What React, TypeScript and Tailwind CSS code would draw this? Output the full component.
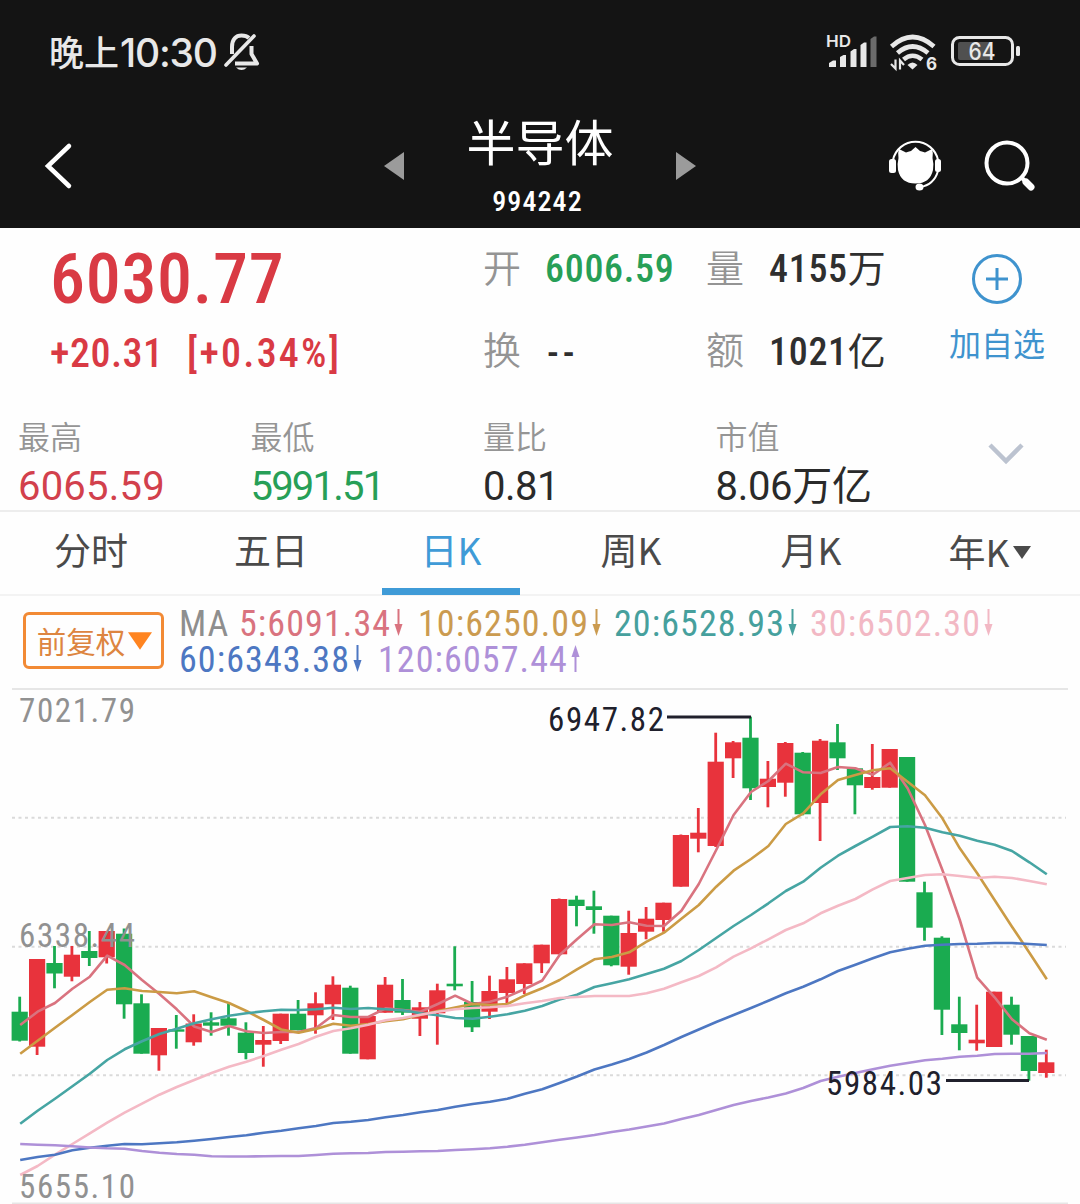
import { clsx } from "clsx";

type Candle = [dir: "u" | "d", high: number, top: number, bottom: number, low: number];

// vertical positions in chart space, one entry per trading day
const CANDLES: Candle[] = [
  ["d", 996.7, 1011.7, 1040.7, 1041.5],
  ["u", 959, 959, 1046.7, 1055],
  ["d", 946, 963, 973.5, 988.3],
  ["u", 946, 954.7, 976.7, 981.3],
  ["d", 931, 951, 958, 966],
  ["u", 931, 931, 957.3, 963.5],
  ["d", 928.5, 933.7, 1004.3, 1018.7],
  ["d", 994.3, 1003.3, 1053.7, 1053.7],
  ["u", 1028, 1028, 1055.3, 1070.7],
  ["d", 1015, 1029.3, 1031.7, 1048.7],
  ["u", 1014.3, 1023.5, 1042.3, 1045.7],
  ["d", 1012.3, 1022.3, 1025.7, 1035.7],
  ["d", 1003.3, 1018.3, 1025.7, 1035.7],
  ["d", 1022.3, 1032.7, 1053, 1059.3],
  ["u", 1026, 1040, 1044.7, 1066.7],
  ["u", 1013.7, 1013.7, 1041, 1044],
  ["d", 1000, 1013.7, 1030.3, 1030.3],
  ["u", 992.3, 1003.3, 1015.3, 1033.7],
  ["u", 976.3, 984.7, 1004.3, 1020],
  ["d", 985.7, 987.7, 1053.7, 1053.7],
  ["u", 1016, 1016, 1059.3, 1059.3],
  ["u", 977, 984.7, 1012.7, 1012.7],
  ["d", 979, 1000, 1012.7, 1015],
  ["u", 1002, 1007.3, 1018.7, 1036],
  ["u", 983.7, 990.3, 1013.3, 1044.7],
  ["d", 946.3, 983.7, 986.3, 990.3],
  ["d", 981, 1002, 1027.3, 1032],
  ["u", 975.7, 991, 1011.7, 1019],
  ["u", 967, 979.3, 993, 1003.3],
  ["u", 963.3, 963.3, 984, 994],
  ["u", 944.7, 944.7, 963.3, 973],
  ["u", 898.5, 899, 954.3, 954.3],
  ["d", 895.7, 899.7, 906, 926.3],
  ["d", 890.7, 906.3, 910, 933.7],
  ["d", 915.7, 915.7, 965.3, 966.3],
  ["u", 910.7, 933, 966.7, 974.7],
  ["u", 907, 918.7, 931.7, 939.3],
  ["u", 902.7, 902.7, 920, 931.7],
  ["u", 834.5, 835, 886.7, 886.7],
  ["u", 808, 832.7, 838.7, 852.3],
  ["u", 732.7, 761.7, 846, 847],
  ["u", 741, 742.3, 758.3, 778],
  ["d", 716.7, 737.7, 788.3, 800],
  ["u", 761, 778.7, 787, 807.3],
  ["u", 742, 743, 782.7, 796.7],
  ["d", 752, 752.7, 814.3, 815.3],
  ["u", 739, 740.7, 803, 841],
  ["d", 724, 742.3, 758.3, 770],
  ["d", 768.3, 768.3, 785.3, 814.3],
  ["u", 744, 777, 788, 789.7],
  ["u", 749, 749, 787.7, 787.7],
  ["d", 757, 757, 881.7, 881.7],
  ["d", 881.7, 892.3, 927.7, 940.7],
  ["d", 936.3, 937.7, 1009.7, 1035],
  ["d", 996.7, 1024.3, 1033, 1050.3],
  ["u", 1004.7, 1039.7, 1043.3, 1050.7],
  ["u", 991.7, 991.7, 1047, 1047],
  ["d", 996.7, 1004.7, 1034.7, 1044.7],
  ["d", 1036, 1036, 1071, 1080.7],
  ["u", 1049.7, 1062.3, 1073, 1077.7],
];

const LINES = [
  {
    color: "#d9737f",
    ys: [
      1025, 1011.7, 1003, 988.7, 976.7, 955.7, 965, 980, 994, 1009.3, 1026.5, 1032, 1026, 1031.3,
      1033, 1032, 1032, 1028, 1015, 1017, 1017, 1008.3, 1010, 1011.7, 1004, 995.7, 1004, 1001.7,
      996.7, 989, 980.5, 955, 939.3, 924.3, 925, 922.3, 925.7, 926, 910.7, 884, 850, 815, 792, 781,
      763.7, 772.3, 773, 767, 768.3, 774.7, 762.7, 788.3, 825, 870, 920, 977.7, 997.3, 1019.3,
      1033.3, 1039.7,
    ],
  },
  {
    color: "#cb9b45",
    ys: [
      1053.7, 1040.7, 1027.7, 1015, 1002, 989.7, 988.3, 991, 992, 993.3, 991.3, 997.3, 1003, 1011,
      1020, 1029.5, 1032.7, 1029, 1023.7, 1025.7, 1024, 1021.3, 1019.3, 1015, 1011, 1007.5, 1004,
      1005, 1004, 995.3, 988.3, 980, 969.3, 959.3, 957, 952.3, 941.7, 932.7, 918.7, 905, 886.7,
      870.7, 859, 846, 824, 813.3, 794.3, 780, 775, 770.3, 768.3, 781.7, 795.3, 818.3, 848.3, 873.3,
      900, 926.7, 952.7, 979.3,
    ],
  },
  {
    color: "#46a5a3",
    ys: [
      1123.7, 1110.7, 1098.7, 1086.3, 1073.7, 1060, 1049.3, 1041.3, 1034, 1028.7, 1023.3, 1019.3,
      1015.7, 1013.3, 1011.3, 1009.7, 1010, 1009.3, 1007.7, 1009, 1008, 1009.3, 1010.3, 1013.3,
      1015.3, 1018, 1018.7, 1016.7, 1014.3, 1010.7, 1006, 999.5, 994.7, 987, 983.3, 979.3, 974,
      968.7, 961, 950, 938, 926, 915, 903.3, 891, 881.7, 867.7, 855.7, 846, 836.7, 827, 826.3,
      827.7, 832.3, 835.7, 840.7, 844.7, 851, 862.3, 874.3,
    ],
  },
  {
    color: "#f4b9c5",
    ys: [
      1175, 1166, 1154.7, 1144, 1133.3, 1122.7, 1112.7, 1103.7, 1094.7, 1087, 1080, 1073, 1066.7,
      1061.7, 1056, 1049.7, 1044, 1036.7, 1031, 1028.3, 1024.7, 1020.3, 1018, 1014.7, 1011.7,
      1009.3, 1008, 1007.3, 1006, 1003.3, 1001, 998, 997, 996, 996, 996, 993.3, 988.7, 982.3, 976,
      967.3, 956.7, 948.3, 939.3, 930, 923.3, 913.3, 905.7, 899, 889.3, 881, 878, 875, 874.3, 876,
      878, 876.7, 878, 881, 884.3,
    ],
  },
  {
    color: "#4d77c2",
    ys: [
      1160, 1157, 1154.7, 1150.3, 1147.7, 1145.7, 1144, 1144.3, 1143.3, 1142.3, 1140.7, 1139, 1137,
      1135.3, 1132.7, 1130.7, 1128.3, 1126, 1123, 1121.7, 1120, 1117.3, 1115, 1112.3, 1110, 1106.7,
      1104, 1101.7, 1098.7, 1093.7, 1089.3, 1083, 1076.5, 1069.5, 1064.5, 1059, 1052.5, 1045, 1037,
      1029.5, 1022, 1015, 1008, 1000.8, 993.3, 986.7, 979.3, 971, 964.7, 958.3, 952.3, 948.7, 945.7,
      944.7, 944, 943.7, 943, 943, 944, 945,
    ],
  },
  {
    color: "#ae90d8",
    ys: [
      1144, 1144.7, 1145.3, 1146.3, 1147.5, 1148.3, 1148.7, 1151, 1152.7, 1154, 1154.7, 1156.3,
      1156.5, 1156.5, 1156.3, 1156, 1156, 1155, 1153.7, 1153.3, 1153, 1152, 1151.7, 1151.3, 1151,
      1150, 1149.3, 1148.3, 1146.7, 1144.7, 1142.3, 1139.7, 1137.5, 1135, 1132, 1129.5, 1126.5,
      1123.5, 1119, 1115, 1110, 1105, 1101, 1097.5, 1093.5, 1088, 1081, 1076.7, 1073, 1069.3,
      1065.7, 1063, 1060.3, 1058.7, 1056.7, 1055.7, 1054, 1053.7, 1053.7, 1053,
    ],
  },
];

const TABS = ["分时", "五日", "日K", "周K", "月K", "年K"];

const UP = "#e8333c";
const DOWN = "#1aab50";

const xAt = (i: number) => 19.7 + i * 17.4;

const DIN = "font-['Roboto','Noto_Sans_CJK_SC',sans-serif] [font-stretch:85%]";

function StatusBar() {
  return (
    <div className="flex h-[104px] items-center justify-between pl-[49px] pr-[59px] text-[#e8e8e8]">
      <div className="flex items-center gap-[7px]">
        <div className="flex items-center">
          <span className="pb-1 text-[35px] font-medium leading-none">晚上</span>
          <span className="ml-px font-['Inter'] text-[39px] font-medium leading-none tracking-[-1.2px]">
            10:30
          </span>
        </div>
        <svg width="36" height="40" viewBox="226 33 36 40" fill="none">
          <path d="M234 55V48C234 40 238 36.500 243.500 36.500C247 36.500 249.500 37.500 251 39" stroke="currentColor" strokeWidth="4" />
          <path d="M253.500 47V55L259 64.500H237" stroke="currentColor" strokeWidth="4" strokeLinejoin="round" />
          <path d="M228 66L256 37" stroke="currentColor" strokeWidth="3.600" strokeLinecap="round" />
          <path d="M238 68.500H249Q243.500 73.500 238 68.500Z" fill="currentColor" />
        </svg>
      </div>
      <svg width="196" height="40" viewBox="825 33 196 40" fill="none">
        <text x="826" y="48" fontSize="16.500" fontWeight="600" fontFamily="Inter" fill="currentColor" textLength="25" lengthAdjust="spacingAndGlyphs">
          HD
        </text>
        <path
          d="M829 68V64L833 61.500H836V68ZM840 68V58L843.500 56H846V68ZM850.500 68V52.500L854 50H856.500V68ZM860.500 68V46L864 43.500H866.500V68Z"
          fill="currentColor"
        />
        <path d="M870.500 68V40L874 37.500H876.500V68Z" fill="#6b6b6b" />
        <g stroke="currentColor" strokeWidth="4.600">
          <path d="M891.500 47.500Q912.500 28.500 934 47.500" />
          <path d="M897.500 54Q912.500 41 928 54" />
          <path d="M903.500 60.500Q912.500 53 922 60.500" />
        </g>
        <path d="M907.500 66Q912.500 61 917.500 66L912.500 70.500Z" fill="currentColor" />
        <path d="M891 65L895.500 69.500V60.500M900 70.500V61.500L904 66" stroke="currentColor" strokeWidth="2.200" />
        <text x="926" y="70.500" fontSize="17" fontWeight="700" fontFamily="Inter" fill="currentColor">
          6
        </text>
        <rect x="952.500" y="38.500" width="60" height="27" rx="7" stroke="currentColor" strokeWidth="3" />
        <rect x="958" y="43" width="34" height="18" rx="2" fill="#505050" />
        <text x="968.500" y="61" fontSize="24" fontWeight="500" fontFamily="Inter" fill="currentColor" textLength="27" lengthAdjust="spacingAndGlyphs">
          64
        </text>
        <rect x="1016" y="47" width="4" height="10" rx="1.500" fill="currentColor" />
      </svg>
    </div>
  );
}

function TitleBar() {
  return (
    <div className="flex h-[124px] items-start pl-11 pr-11 text-white">
      <svg className="mt-[38px]" width="30" height="48" viewBox="44 142 30 48" fill="none">
        <path d="M69 146L48 166L69 186" stroke="currentColor" strokeWidth="4.500" strokeLinecap="round" />
      </svg>
      <svg className="ml-[310px] mt-[48px]" width="20" height="28" viewBox="0 0 20 28">
        <path d="M20 0V28L0 14Z" fill="#9b9b9b" />
      </svg>
      <div className="flex w-[272px] flex-col items-center">
        <h1 className="mt-[7px] text-[49px] leading-[58px]">半导体</h1>
        <span className={clsx(DIN, "mr-[5px] mt-[17px] text-[28px] font-medium leading-8 tracking-[1.1px]")}>994242</span>
      </div>
      <svg className="mt-[48px]" width="20" height="28" viewBox="0 0 20 28">
        <path d="M0 0V28L20 14Z" fill="#9b9b9b" />
      </svg>
      <svg className="ml-[192px] mt-[36px]" width="54" height="52" viewBox="888 140 54 52" fill="none">
        <path d="M893 160A23 23 0 0 1 938 160" stroke="currentColor" strokeWidth="2" />
        <rect x="889" y="159" width="7" height="14" rx="2.500" fill="currentColor" />
        <rect x="935" y="159" width="6" height="13" rx="2.500" fill="currentColor" />
        <path d="M938 171Q934 185 920 187" stroke="currentColor" strokeWidth="2" />
        <ellipse cx="919.500" cy="187" rx="4" ry="3.500" fill="currentColor" />
        <path
          d="M899 149L906 152.500Q908 151.500 911 151L915.500 147L920 151Q923 151.500 925 152.500L932 149Q933.500 153 932.500 158Q934 164 933 170Q930 183.500 915.500 183.500Q901 183.500 898 170Q897 164 898.500 158Q897.500 153 899 149Z"
          fill="currentColor"
        />
      </svg>
      <svg className="ml-[42px] mt-[36px]" width="52" height="52" viewBox="984 140 52 52" fill="none">
        <circle cx="1007" cy="163" r="20.500" stroke="currentColor" strokeWidth="4" />
        <path d="M1021 177L1026 182" stroke="currentColor" strokeWidth="4" />
        <path d="M1026 182L1031 187" stroke="currentColor" strokeWidth="7" strokeLinecap="round" />
      </svg>
    </div>
  );
}

function Stat({ label, value, className }: { label: string; value: string; className: string }) {
  return (
    <div className="w-[232.500px]">
      <div className="text-[32px] font-[350] leading-[46px] text-[#959595]">{label}</div>
      <div
        className={clsx(
          "pt-[3px] font-['Roboto','Noto_Sans_CJK_SC',sans-serif] text-[40px] leading-[52px]",
          className
        )}
      >
        {value}
      </div>
    </div>
  );
}

function Quote() {
  return (
    <section className="h-[284px] border-b-2 border-[#ededed]">
      <div className="flex h-[184px]">
        <div className="w-[483px] pl-[50px] text-[#d93a44]">
          <div className={clsx(DIN, "mt-[14px] text-[70px] font-medium leading-[74px] tracking-[0.7px]")}>6030.77</div>
          <div className={clsx(DIN, "mt-[14px] flex text-[40px] font-medium leading-[48px]")}>
            <span className="w-[137px] tracking-[0.5px]">+20.31</span>
            <span className="tracking-[2.2px]">[+0.34%]</span>
          </div>
        </div>
        <div
          className={clsx(
            DIN,
            "grid grid-cols-[62px_161px_63px_180px] grid-rows-[82px_82px] text-[38px] font-medium tracking-[0.7px] text-[#2f2f2f] [&>*]:flex [&>*]:items-center"
          )}
        >
          <span className="font-[350] text-[#949494]">开</span>
          <span className="text-[#279f57]">6006.59</span>
          <span className="font-[350] text-[#949494]">量</span>
          <span>4155<i className="font-normal not-italic tracking-normal">万</i></span>
          <span className="font-[350] text-[#949494]">换</span>
          <span className="pl-0.5 pt-1 tracking-[4px]">--</span>
          <span className="font-[350] text-[#949494]">额</span>
          <span className="pt-0.5">1021<i className="font-normal not-italic tracking-normal">亿</i></span>
        </div>
        <button className="flex flex-col items-center text-[#3f93ce]">
          <svg className="mt-[25px]" width="52" height="52" viewBox="0 0 52 52" fill="none" stroke="currentColor" strokeWidth="3">
            <circle cx="26" cy="26" r="23.500" />
            <path d="M26 15V37M15 26H37" />
          </svg>
          <span className="mt-[14px] text-[32px] leading-[46px]">加自选</span>
        </button>
      </div>
      <div className="flex pl-[18px]">
        <Stat label="最高" value="6065.59" className="text-[#d2404c] tracking-[0.2px]" />
        <Stat label="最低" value="5991.51" className="text-[#279f57] tracking-[-1.8px]" />
        <Stat label="量比" value="0.81" className="text-[#2a2a2a] tracking-[-0.5px]" />
        <Stat label="市值" value="8.06万亿" className="text-[#2a2a2a] tracking-[-0.3px]" />
        <svg className="ml-10 mt-[31px]" width="36" height="22" viewBox="0 0 36 22" fill="none">
          <path d="M2 2L18 18L34 2" stroke="#bcc3d0" strokeWidth="4.500" />
        </svg>
      </div>
    </section>
  );
}

function Tabs() {
  return (
    <nav className="grid h-[84px] grid-cols-6 border-b-2 border-[#f3f3f3] text-[37px] text-[#4a4a4a]">
      {TABS.map((tab) => (
        <div
          key={tab}
          className={clsx(
            "relative flex items-center justify-center",
            tab === "年K" ? "pb-0.5" : "pb-[7px] pl-0.5",
            tab === "日K" && "text-[#3f9bd7]"
          )}
        >
          {tab}
          {tab === "年K" && (
            <svg className="ml-1" width="18" height="13" viewBox="0 0 18 13">
              <path d="M0 0H18L9 13Z" fill="#4a4a4a" />
            </svg>
          )}
          {tab === "日K" && <span className="absolute -bottom-px left-[22px] h-[7px] w-[138px] bg-[#3f9bd7]" />}
        </div>
      ))}
    </nav>
  );
}

function Arrow({ up }: { up?: boolean }) {
  return (
    <svg className={clsx("ml-[3px] mb-[3px]", up && "rotate-180")} width="9" height="27" viewBox="0 0 9 27">
      <path d="M4.500 0V20" stroke="currentColor" strokeWidth="2" />
      <path d="M0.500 15H8.500L4.500 27Z" fill="currentColor" />
    </svg>
  );
}

function Legend() {
  return (
    <div className="flex h-[92px] items-start pl-[23px] pt-[16px]">
      <button className="flex h-[57px] w-[141px] items-center justify-center rounded-md border-[3px] border-[#f28a35] pl-0.5 text-[29.500px] text-[#dd8540]">
        前复权
        <svg className="ml-[3px]" width="24" height="18" viewBox="0 0 25 18">
          <path d="M0 0H25L12.500 18Z" fill="#ff8420" />
        </svg>
      </button>
      <div
        className={clsx(
          DIN,
          "ml-[15px] -mt-[6px] text-[36px] leading-9 tracking-[1.1px] [&_span]:flex [&_span]:items-center"
        )}
      >
        <div className="flex">
          <span className="w-[60px] text-[#8e8e8e]">MA</span>
          <span className="w-[179px] text-[#d9737f]">5:6091.34<Arrow /></span>
          <span className="w-[196px] text-[#cb9b50]">10:6250.09<Arrow /></span>
          <span className="w-[196px] text-[#46a09d]">20:6528.93<Arrow /></span>
          <span className="text-[#f2b8c4]">30:6502.30<Arrow /></span>
        </div>
        <div className="flex">
          <span className="w-[199px] text-[#4d77c2]">60:6343.38<Arrow /></span>
          <span className="text-[#ae90d8]">120:6057.44<Arrow up /></span>
        </div>
      </div>
    </div>
  );
}

function Label({ x, y, color, children }: { x: number; y: number; color: string; children: string }) {
  return (
    <text x={x} y={y} fill={color} fontSize="33" textLength="116" className={DIN}>
      {children}
    </text>
  );
}

function KChart() {
  return (
    <svg className="block" width="1080" height="516" viewBox="0 688 1080 516" fill="none">
      <path d="M12 689H1068M12 1203.500H1068" stroke="#e6e6e6" strokeWidth="2" />
      <path d="M12 817.700H1066M12 946.800H1066M12 1075.300H1066" stroke="#dadada" strokeWidth="2" strokeDasharray="3 3.500" />
      {CANDLES.map(([dir, high, top, bottom, low], i) => {
        const color = dir === "u" ? UP : DOWN;
        return (
          <g key={i} fill={color}>
            <rect x={xAt(i) - 1.4} y={high} width="2.800" height={low - high} />
            <rect x={xAt(i) - 8.1} y={top} width="16.200" height={bottom - top} />
          </g>
        );
      })}
      {LINES.map(({ color, ys }) => (
        <polyline
          key={color}
          points={ys.map((y, i) => `${xAt(i) + 0.5},${y}`).join(" ")}
          stroke={color}
          strokeWidth="2.600"
          strokeLinejoin="round"
        />
      ))}
      <path d="M667 717H751M946 1080.500H1029" stroke="#20202c" strokeWidth="2.800" />
      <Label x={19} y={722} color="#919191">7021.79</Label>
      <Label x={19} y={947} color="#919191">6338.44</Label>
      <Label x={19} y={1197.500} color="#919191">5655.10</Label>
      <Label x={548} y={731} color="#20202c">6947.82</Label>
      <Label x={826} y={1094.500} color="#20202c">5984.03</Label>
    </svg>
  );
}

export default function App() {
  return (
    <main className="h-[1204px] w-[1080px] overflow-hidden bg-[#fefefe] font-['Noto_Sans_CJK_SC',sans-serif]">
      <header className="h-[228px] bg-[#141414]">
        <StatusBar />
        <TitleBar />
      </header>
      <Quote />
      <Tabs />
      <Legend />
      <KChart />
    </main>
  );
}
